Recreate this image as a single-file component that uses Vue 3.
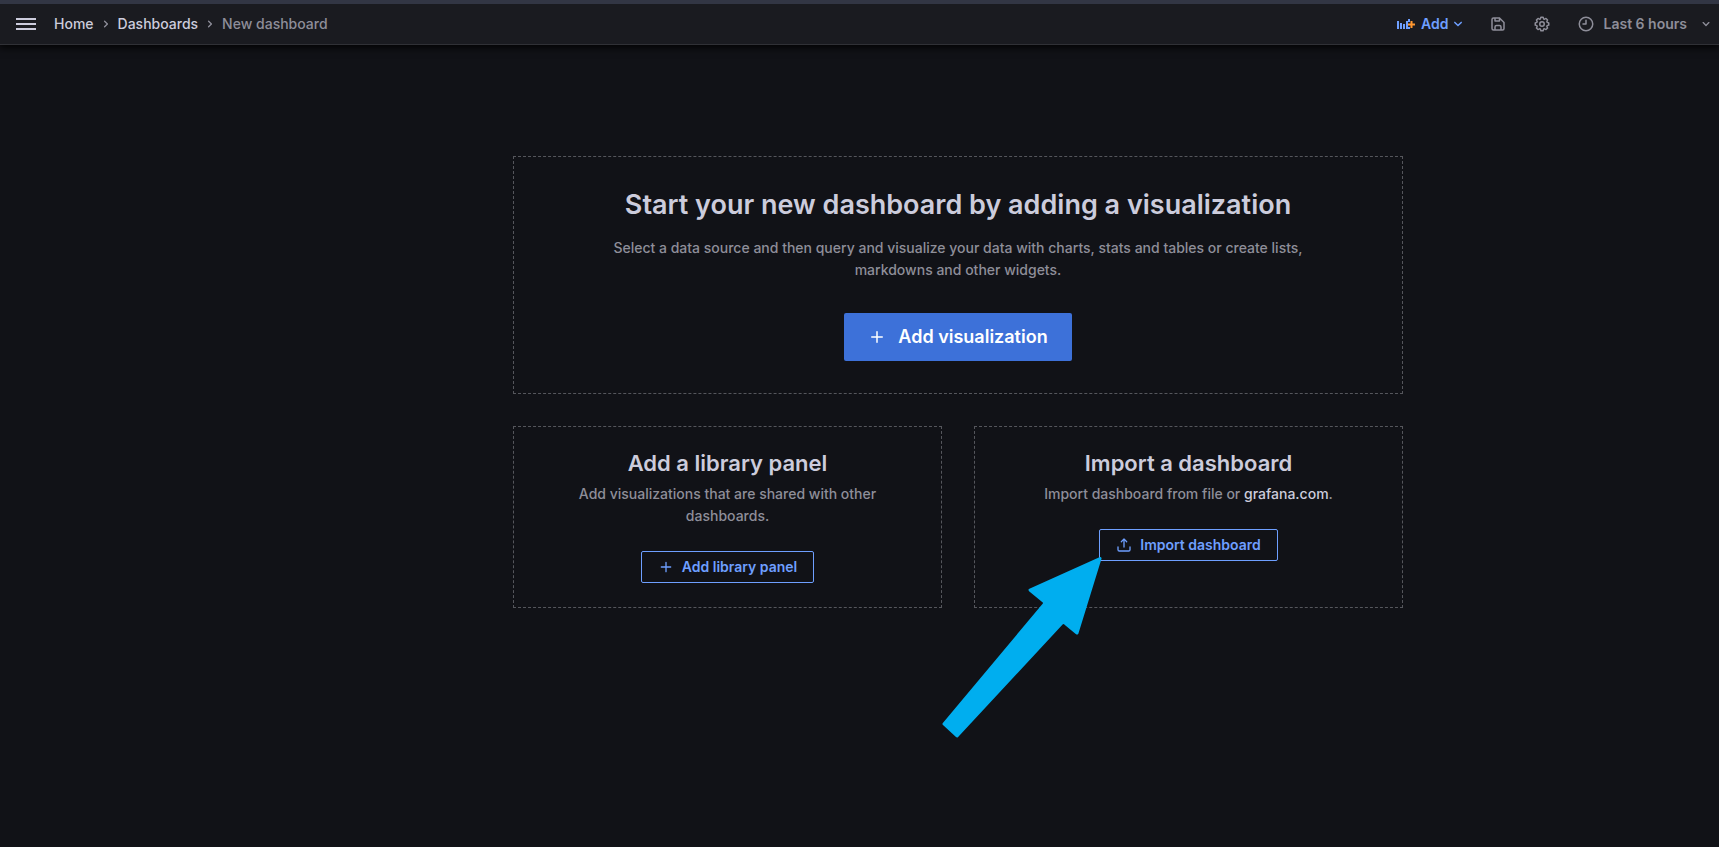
<script setup>
const icons = {
  plus: 'M19 11h-6V5a1 1 0 0 0-2 0v6H5a1 1 0 0 0 0 2h6v6a1 1 0 0 0 2 0v-6h6a1 1 0 0 0 0-2Z',
  upload:
    'M8.71 7.71 11 5.41V15a1 1 0 0 0 2 0V5.41l2.29 2.3a1 1 0 0 0 1.42 0 1 1 0 0 0 0-1.42l-4-4a1 1 0 0 0-.33-.21 1 1 0 0 0-.76 0 1 1 0 0 0-.33.21l-4 4a1 1 0 1 0 1.42 1.42ZM21 14a1 1 0 0 0-1 1v4a1 1 0 0 1-1 1H5a1 1 0 0 1-1-1v-4a1 1 0 0 0-2 0v4a3 3 0 0 0 3 3h14a3 3 0 0 0 3-3v-4a1 1 0 0 0-1-1Z',
  save: 'm20.71 9.29-6-6a1 1 0 0 0-.32-.21A1.09 1.09 0 0 0 14 3H6a3 3 0 0 0-3 3v12a3 3 0 0 0 3 3h12a3 3 0 0 0 3-3v-8a1 1 0 0 0-.29-.71ZM9 5h4v2H9Zm6 14H9v-3a1 1 0 0 1 1-1h4a1 1 0 0 1 1 1Zm4-1a1 1 0 0 1-1 1h-1v-3a3 3 0 0 0-3-3h-4a3 3 0 0 0-3 3v3H6a1 1 0 0 1-1-1V6a1 1 0 0 1 1-1h1v3a1 1 0 0 0 1 1h6a1 1 0 0 0 1-1V6.41l4 4Z',
  cog: 'M21.32 9.55l-1.89-.63.89-1.78A1 1 0 0 0 20.13 6L18 3.87a1 1 0 0 0-1.15-.19l-1.78.89-.63-1.89A1 1 0 0 0 13.5 2h-3a1 1 0 0 0-.95.68l-.63 1.89-1.78-.89A1 1 0 0 0 6 3.87L3.87 6a1 1 0 0 0-.19 1.15l.89 1.78-1.89.63a1 1 0 0 0-.68.94v3a1 1 0 0 0 .68.95l1.89.63-.89 1.78A1 1 0 0 0 3.87 18L6 20.13a1 1 0 0 0 1.15.19l1.78-.89.63 1.89a1 1 0 0 0 .95.68h3a1 1 0 0 0 .95-.68l.63-1.89 1.78.89a1 1 0 0 0 1.13-.19L20.13 18a1 1 0 0 0 .19-1.15l-.89-1.78 1.89-.63a1 1 0 0 0 .68-.94v-3a1 1 0 0 0-.68-.95ZM20 12.78l-1.2.4A2 2 0 0 0 17.64 16l.57 1.14-1.1 1.1L16 17.64a2 2 0 0 0-2.79 1.16l-.4 1.2h-1.59l-.4-1.2A2 2 0 0 0 8 17.64l-1.14.57-1.1-1.1L6.36 16a2 2 0 0 0-1.16-2.82L4 12.78v-1.56l1.2-.4A2 2 0 0 0 6.36 8l-.57-1.11 1.1-1.1L8 6.36a2 2 0 0 0 2.82-1.16l.4-1.2h1.56l.4 1.2A2 2 0 0 0 16 6.36l1.14-.57 1.1 1.1L17.64 8a2 2 0 0 0 1.16 2.79l1.2.4ZM12 8a4 4 0 1 0 4 4 4 4 0 0 0-4-4Zm0 6a2 2 0 1 1 2-2 2 2 0 0 1-2 2Z',
  clock:
    'M12 2A10 10 0 1 0 22 12 10 10 0 0 0 12 2Zm0 18a8 8 0 1 1 8-8 8 8 0 0 1-8 8Zm0-14a1 1 0 0 0-1 1v4H8a1 1 0 0 0 0 2h4a1 1 0 0 0 1-1V7a1 1 0 0 0-1-1Z',
  down: 'M17 9.17a1 1 0 0 0-1.41 0L12 12.71 8.46 9.17a1 1 0 0 0-1.41 0 1 1 0 0 0 0 1.42l4.24 4.24a1 1 0 0 0 1.42 0L17 10.59a1 1 0 0 0 0-1.42Z',
  right:
    'M14.83 11.29 10.59 7.05a1 1 0 0 0-1.42 0 1 1 0 0 0 0 1.41L12.71 12l-3.54 3.54a1 1 0 0 0 0 1.41 1 1 0 0 0 1.42 0l4.24-4.24a1 1 0 0 0 0-1.42Z',
}
</script>

<template>
  <div class="page">
    <header class="topbar">
      <div class="start">
        <button class="menu" type="button" aria-label="Toggle menu">
          <svg width="20" height="12" viewBox="0 0 20 12"><path d="M0 0h20v2H0zM0 5h20v2H0zM0 10h20v2H0z" /></svg>
        </button>
        <nav class="crumbs" aria-label="Breadcrumbs">
          <a href="#">Home</a>
          <svg class="i16" viewBox="0 0 24 24"><path :d="icons.right" /></svg>
          <a href="#">Dashboards</a>
          <svg class="i16" viewBox="0 0 24 24"><path :d="icons.right" /></svg>
          <span>New dashboard</span>
        </nav>
      </div>
      <div class="actions">
        <button class="add" type="button">
          <svg width="18" height="12" viewBox="0 0 18 12">
            <path d="M0 3h2v8H0zM3 5h2v6H3zM6 6h2v5H6zM9 3h2v8H9zM11 1h2v3h-2zM11 9h2v2h-2z" />
            <path class="spark" d="M13.500 3h2v2.500H18v2h-2.500V10h-2V7.500H11v-2h2.500z" />
          </svg>
          <span class="label">Add</span>
          <svg class="i18" viewBox="0 0 24 24"><path :d="icons.down" /></svg>
        </button>
        <div class="tools">
          <button type="button" aria-label="Save dashboard">
            <svg class="i18" viewBox="0 0 24 24"><path :d="icons.save" /></svg>
          </button>
          <button type="button" aria-label="Dashboard settings">
            <svg class="i18" viewBox="0 0 24 24"><path :d="icons.cog" /></svg>
          </button>
          <button class="range" type="button">
            <svg class="i18" viewBox="0 0 24 24"><path :d="icons.clock" /></svg>
            <span class="label">Last 6 hours</span>
            <svg class="i16" viewBox="0 0 24 24"><path :d="icons.down" /></svg>
          </button>
        </div>
      </div>
    </header>

    <main>
      <div class="grid">
        <section class="card hero">
          <h1>Start your new dashboard by adding a visualization</h1>
          <p>
            Select a data source and then query and visualize your data with charts, stats and tables or create lists,
            markdowns and other widgets.
          </p>
          <button class="primary" type="button">
            <svg class="i18" viewBox="0 0 24 24"><path :d="icons.plus" /></svg>
            <span>Add visualization</span>
          </button>
        </section>
        <section class="card">
          <h2>Add a library panel</h2>
          <p>Add visualizations that are shared with other dashboards.</p>
          <button class="outline" type="button">
            <svg class="i16" viewBox="0 0 24 24"><path :d="icons.plus" /></svg>
            <span>Add library panel</span>
          </button>
        </section>
        <section class="card">
          <h2>Import a dashboard</h2>
          <p>Import dashboard from file or <a href="#">grafana.com</a>.</p>
          <button class="outline" type="button">
            <svg class="i16" viewBox="0 0 24 24"><path :d="icons.upload" /></svg>
            <span>Import dashboard</span>
          </button>
          <svg class="pointer" width="160" height="182" viewBox="0 0 160 182" aria-hidden="true">
            <path d="M158 2.500 88 34l14 11.500q1 1.500 0 3L2 168l13 12L119.500 67.500q2-2 4 0L135 77z" />
          </svg>
        </section>
      </div>
    </main>
  </div>
</template>

<style>
body {
  margin: 0;
  background: #111217;
}
</style>

<style scoped>
.page {
  min-height: 100vh;
  font-family: Inter, "Liberation Sans", sans-serif;
  font-size: 14px;
  font-weight: 500;
  line-height: 22px;
  color: #8e8e99;
}
svg {
  display: block;
  flex: none;
  fill: currentColor;
}
.i16 {
  width: 16px;
  height: 16px;
}
.i18 {
  width: 18px;
  height: 18px;
}
a {
  color: #ccccdc;
  text-decoration: none;
}
button {
  display: flex;
  align-items: center;
  padding: 0;
  border: 0;
  background: none;
  color: inherit;
  font: inherit;
  font-weight: 600;
  cursor: pointer;
}
.topbar {
  display: flex;
  align-items: center;
  justify-content: space-between;
  height: 40px;
  padding: 0 5px 0 16px;
  border-top: 4px solid #323644;
  border-bottom: 1px solid #303136;
  background: #1a1b20;
  box-shadow: 0 1px 8px 1px #000000;
}
.start,
.crumbs,
.actions,
.tools {
  display: flex;
  align-items: center;
}
.start {
  gap: 18px;
}
.menu {
  color: #ccccdc;
}
.crumbs {
  gap: 4px;
}
.actions {
  gap: 22px;
}
.tools {
  gap: 26px;
}
.add {
  color: #6e9fff;
}
.add .label {
  padding: 0 1px 0 6px;
}
.spark {
  fill: #ff9830;
}
.range .label {
  padding: 0 11px 0 8px;
}
main {
  display: flex;
  justify-content: center;
  padding: 111px 0 32px 197px;
}
.grid {
  display: grid;
  grid-template-columns: 1fr 1fr;
  gap: 32px;
  width: 100%;
  max-width: 890px;
}
.card {
  position: relative;
  display: flex;
  flex-direction: column;
  align-items: center;
  padding: 24px;
  border: 1px dashed #55565c;
  text-align: center;
}
.hero {
  grid-column: span 2;
  padding: 32px;
}
h1,
h2 {
  margin: 0;
  color: #ccccdc;
  font-weight: 600;
}
h1 {
  margin-bottom: 16px;
  font-size: 27px;
  line-height: 32px;
}
h2 {
  margin-bottom: 8px;
  font-size: 22px;
  line-height: 24px;
}
p {
  margin: 0 0 24px;
}
.hero p {
  max-width: 744px;
  margin-bottom: 32px;
}
.primary {
  gap: 12px;
  height: 48px;
  padding: 0 24px;
  border-radius: 2px;
  background: #3d71d9;
  color: #ffffff;
  font-size: 18px;
}
.outline {
  gap: 8px;
  height: 32px;
  padding: 0 16px;
  border: 1px solid #6e9fff;
  border-radius: 2px;
  color: #6e9fff;
}
.pointer {
  position: absolute;
  top: 129px;
  left: -33px;
  fill: #00aeef;
  stroke: #00aeef;
  stroke-width: 3;
  stroke-linejoin: round;
}
</style>
